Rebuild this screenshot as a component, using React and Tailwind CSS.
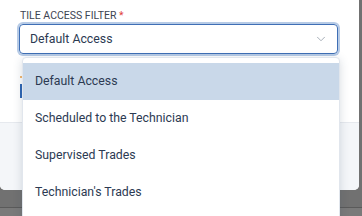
import { ChevronDown } from "lucide-react";

const options = [
  "Default Access",
  "Scheduled to the Technician",
  "Supervised Trades",
  "Technician's Trades",
];

const App = () => {
  return (
    <div
      className="relative w-[362px] h-[216px] overflow-hidden bg-[#717171]"
      style={{ fontFamily: "Roboto, 'Liberation Sans', sans-serif" }}
    >
      {/* Modal */}
      <div className="w-[359px] h-[190px] bg-white rounded-br-[5px] rounded-bl-[5px] flex flex-col overflow-hidden">
        <div className="h-[122px] pl-[20px] pr-[21px] pt-[9px]">
          <div className="text-[10.5px] leading-[14px] text-[#3d4451]">
            TILE ACCESS FILTER <span className="text-[#e0413a]">*</span>
          </div>

          <div className="mt-[1px] h-[30px] -ml-[1px] border border-[#3f6fb5] rounded-[4px] ring-2 ring-[#b7cbe6] flex items-center justify-between pl-[10px] pr-[9px]">
            <span className="text-[12.3px] text-[#2c3a52]">Default Access</span>
            <ChevronDown size={14} strokeWidth={1.5} className="text-[#9aa3ae]" />
          </div>

          {/* partially hidden content behind the list */}
          <div className="mt-[22px] flex flex-col items-start">
            <div className="w-[2px] h-[2px] rounded-full bg-[#f0a040]" />
            <div className="mt-[6px] w-[2px] h-[14px] bg-[#2f66b3]" />
          </div>
        </div>
        <div className="flex-1 bg-[#f4f6f9] border-t border-[#e6e9ee]" />
      </div>

      <div className="mt-[17px] h-[1px] bg-[#5a5a5a]" />
      <div className="h-[8px] bg-[#7a7a7a]" />

      {/* Dropdown list */}
      <div className="absolute left-[22px] top-[57px] w-[318px] h-[170px] bg-white border border-[#e1e6ed] rounded-[4px] shadow-[0_2px_10px_rgba(40,60,90,0.18)] pt-[5px]">
        {options.map((opt, i) => (
          <div
            key={opt}
            className={`h-[37px] flex items-center pl-[12px] text-[12.3px] text-[#2c3a52] ${
              i === 0 ? "bg-[#c9d8e9]" : ""
            }`}
          >
            {opt}
          </div>
        ))}
      </div>
    </div>
  );
};

export default App;
